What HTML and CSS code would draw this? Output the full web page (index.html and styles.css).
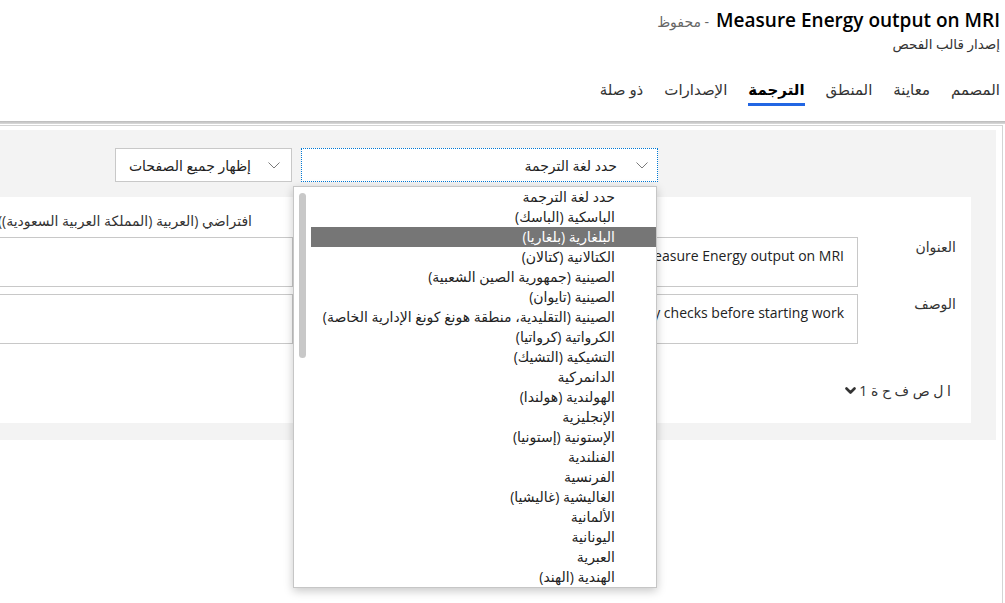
FILE: index.html
```html
<!DOCTYPE html>
<html lang="ar" dir="rtl">
<head>
<meta charset="utf-8">
<title>Measure Energy output on MRI</title>
<link rel="stylesheet" href="styles.css">
</head>
<body>
<header class="header">
  <div class="title-row">
    <h1 class="title">Measure Energy output on MRI</h1>
    <span class="status">- محفوظ</span>
  </div>
  <div class="subtitle">إصدار قالب الفحص</div>
  <nav class="tabs">
    <span class="tab">المصمم</span>
    <span class="tab">معاينة</span>
    <span class="tab">المنطق</span>
    <span class="tab active">الترجمة</span>
    <span class="tab">الإصدارات</span>
    <span class="tab">ذو صلة</span>
  </nav>
</header>
<div class="rule"></div>
<main class="frame">
  <div class="panel">
    <div class="toolbar">
      <div class="select lang">
        <svg class="chev" width="12" height="7" viewBox="0 0 12 7"><polyline points="0.5,0.5 6,6 11.5,0.5" fill="none" stroke="#7a7a7a" stroke-width="1"/></svg>
        <span>حدد لغة الترجمة</span>
      </div>
      <div class="select pages">
        <svg class="chev" width="12" height="7" viewBox="0 0 12 7"><polyline points="0.5,0.5 6,6 11.5,0.5" fill="none" stroke="#7a7a7a" stroke-width="1"/></svg>
        <span>إظهار جميع الصفحات</span>
      </div>
    </div>
    <section class="card">
      <div class="grid">
        <div></div>
        <div></div>
        <div class="thead tgt">افتراضي (العربية (المملكة العربية السعودية))</div>

        <div class="label">العنوان</div>
        <div class="box src" dir="ltr">Measure Energy output on MRI</div>
        <div class="box tgt"></div>

        <div class="label">الوصف</div>
        <div class="box src" dir="ltr">Perform safety checks before starting work</div>
        <div class="box tgt"></div>
      </div>
      <div class="pager">
        <span>ا ل ص ف ح ة 1</span>
        <svg width="11" height="8" viewBox="0 0 11 8"><path d="M1.5 1.5 L5.5 5.5 L9.5 1.5" fill="none" stroke="#333" stroke-width="2.6" stroke-linecap="round" stroke-linejoin="round"/></svg>
      </div>
    </section>
  </div>
</main>
<div class="dropdown">
  <div class="thumb"></div>
  <div class="opt">حدد لغة الترجمة</div>
  <div class="opt">الباسكية (الباسك)</div>
  <div class="opt sel">البلغارية (بلغاريا)</div>
  <div class="opt">الكتالانية (كتالان)</div>
  <div class="opt">الصينية (جمهورية الصين الشعبية)</div>
  <div class="opt">الصينية (تايوان)</div>
  <div class="opt">الصينية (التقليدية، منطقة هونغ كونغ الإدارية الخاصة)</div>
  <div class="opt">الكرواتية (كرواتيا)</div>
  <div class="opt">التشيكية (التشيك)</div>
  <div class="opt">الدانمركية</div>
  <div class="opt">الهولندية (هولندا)</div>
  <div class="opt">الإنجليزية</div>
  <div class="opt">الإستونية (إستونيا)</div>
  <div class="opt">الفنلندية</div>
  <div class="opt">الفرنسية</div>
  <div class="opt">الغاليشية (غاليشيا)</div>
  <div class="opt">الألمانية</div>
  <div class="opt">اليونانية</div>
  <div class="opt">العبرية</div>
  <div class="opt">الهندية (الهند)</div>
</div>
</body>
</html>
```
FILE: styles.css
```css
* { box-sizing: border-box; }
html, body { margin: 0; }
body {
  width: 1005px;
  height: 603px;
  overflow: hidden;
  position: relative;
  background: #fff;
  color: #333;
  font-family: "Open Sans", "DejaVu Sans", sans-serif;
  font-size: 14px;
}

.header { height: 121px; padding: 6px 5px 0 0; }
.title-row { display: flex; align-items: baseline; gap: 7px; }
.title { margin: 0; font-size: 19px; font-weight: 600; line-height: 28px; color: #000; }
.status { font-size: 14px; color: #666; }
.subtitle { font-size: 13.5px; line-height: 20px; color: #333; }
.tabs { display: flex; gap: 21px; margin-top: 20px; }
.tab {
  font-size: 15px;
  line-height: 20px;
  padding: 5px 0 4px;
  border-bottom: 3px solid transparent;
  color: #333;
}
.tab.active { font-weight: 700; color: #000; border-bottom-color: #2266e3; }

.rule { height: 3px; background: linear-gradient(#bababa, #dadada); }

.frame {
  margin: 1px 2px 0 0;
  height: 478px;
  border-top: 1px solid #d4d4d4;
  border-right: 1px solid #d4d4d4;
  padding: 4px 6px 0 0;
}
.panel { background: #f3f3f3; padding: 18px 0 17px 0; }
.toolbar { display: flex; gap: 9px; padding-right: 338px; }
.select {
  height: 34px;
  display: flex;
  align-items: center;
  background: #fff;
  border: 1px solid #c8c8c8;
  font-size: 14px;
  color: #222;
}
.select.lang { width: 357px; border: 1px dotted #0078d4; padding-right: 9px; gap: 19px; }
.select.pages { width: 177px; padding-right: 11px; gap: 17px; }
.chev { flex: none; }

.card {
  margin: 15px 25px 0 0;
  width: 1150px;
  background: #fff;
  padding: 0 15px 22px 0;
}
.grid {
  display: grid;
  grid-template-columns: 98px 520px 500px;
  row-gap: 7px;
}
.thead { height: 33px; padding: 14px 41px 0 0; line-height: 20px; white-space: nowrap; color: #333; }
.tgt { margin-right: 45px; }
.label { line-height: 20px; color: #333; }
.box {
  height: 50px;
  border: 1px solid #c8c8c8;
  padding: 8px 13px 0;
  line-height: 20px;
  font-size: 14px;
  color: #222;
  white-space: nowrap;
  overflow: hidden;
  text-align: right;
  background: #fff;
}
.pager {
  margin-top: 37px;
  padding-right: 5px;
  display: flex;
  align-items: center;
  gap: 3px;
  line-height: 20px;
  color: #333;
}

.dropdown {
  position: absolute;
  left: 293px;
  top: 186px;
  width: 364px;
  height: 402px;
  background: #fff;
  border: 1px solid #c6c6c6;
  box-shadow: 0 3px 9px rgba(0, 0, 0, 0.22);
  padding-left: 17px;
}
.thumb {
  position: absolute;
  left: 5px;
  top: 6px;
  width: 7px;
  height: 165px;
  border-radius: 4px;
  background: #c8c8c8;
}
.opt {
  height: 20px;
  line-height: 20px;
  padding-right: 41px;
  font-size: 14px;
  color: #222;
  white-space: nowrap;
}
.opt.sel { background: #767676; color: #fff; }
```
